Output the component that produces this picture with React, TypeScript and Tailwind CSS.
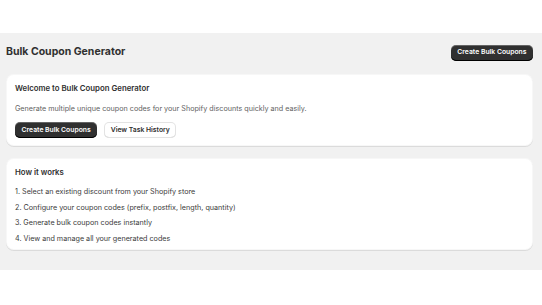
const steps = [
  "1. Select an existing discount from your Shopify store",
  "2. Configure your coupon codes (prefix, postfix, length, quantity)",
  "3. Generate bulk coupon codes instantly",
  "4. View and manage all your generated codes",
];

const PrimaryButton = ({ children }: { children: string }) => (
  <button className="h-[16px] px-[6.5px] rounded-[5px] bg-[#303030] text-white text-[6.8px] font-semibold leading-none shadow-[inset_0_-1px_0_0_#000,inset_0_1px_0_0_rgba(255,255,255,0.25)]">
    {children}
  </button>
);

const SecondaryButton = ({ children }: { children: string }) => (
  <button className="h-[16px] px-[6.5px] rounded-[5px] bg-white text-[#303030] text-[6.8px] font-semibold leading-none shadow-[inset_0_0_0_1px_#e3e3e3,inset_0_-1px_0_0_#d4d4d4]">
    {children}
  </button>
);

const Card = ({ children, className }: { children: React.ReactNode; className?: string }) => (
  <div className={"bg-white rounded-[8px] shadow-[0_1px_0_0_rgba(26,26,26,0.1),inset_0_0_0_1px_rgba(0,0,0,0.03)] " + (className ?? "")}>
    {children}
  </div>
);

export default function App() {
  return (
    <div className="h-[305px] bg-white text-[#303030]" style={{ fontFamily: "Inter, 'Noto Sans', sans-serif" }}>
      <div className="h-[33px]" />
      <div className="h-[237px] bg-[#f1f1f1] pl-[6px] pr-[9px] pt-[11px]">
        <div className="flex items-center justify-between h-[17px]">
          <h1 className="text-[10.5px] font-bold leading-none">Bulk Coupon Generator</h1>
          <PrimaryButton>Create Bulk Coupons</PrimaryButton>
        </div>

        <Card className="mt-[13px] px-[9px] pt-[9px] pb-[8px]">
          <h2 className="text-[7.8px] font-semibold leading-[10px]">Welcome to Bulk Coupon Generator</h2>
          <p className="mt-[11px] text-[7.2px] leading-[10px] text-[#616161]">
            Generate multiple unique coupon codes for your Shopify discounts quickly and easily.
          </p>
          <div className="mt-[8px] flex gap-[7px]">
            <PrimaryButton>Create Bulk Coupons</PrimaryButton>
            <SecondaryButton>View Task History</SecondaryButton>
          </div>
        </Card>

        <Card className="mt-[12px] px-[9px] pt-[9px] pb-[4px]">
          <h2 className="text-[7.8px] font-semibold leading-[11px]">How it works</h2>
          <ul className="mt-[6px] text-[7.2px] leading-[15.5px] text-[#3a3a3a]">
            {steps.map((s) => (
              <li key={s}>{s}</li>
            ))}
          </ul>
        </Card>
      </div>
    </div>
  );
}
